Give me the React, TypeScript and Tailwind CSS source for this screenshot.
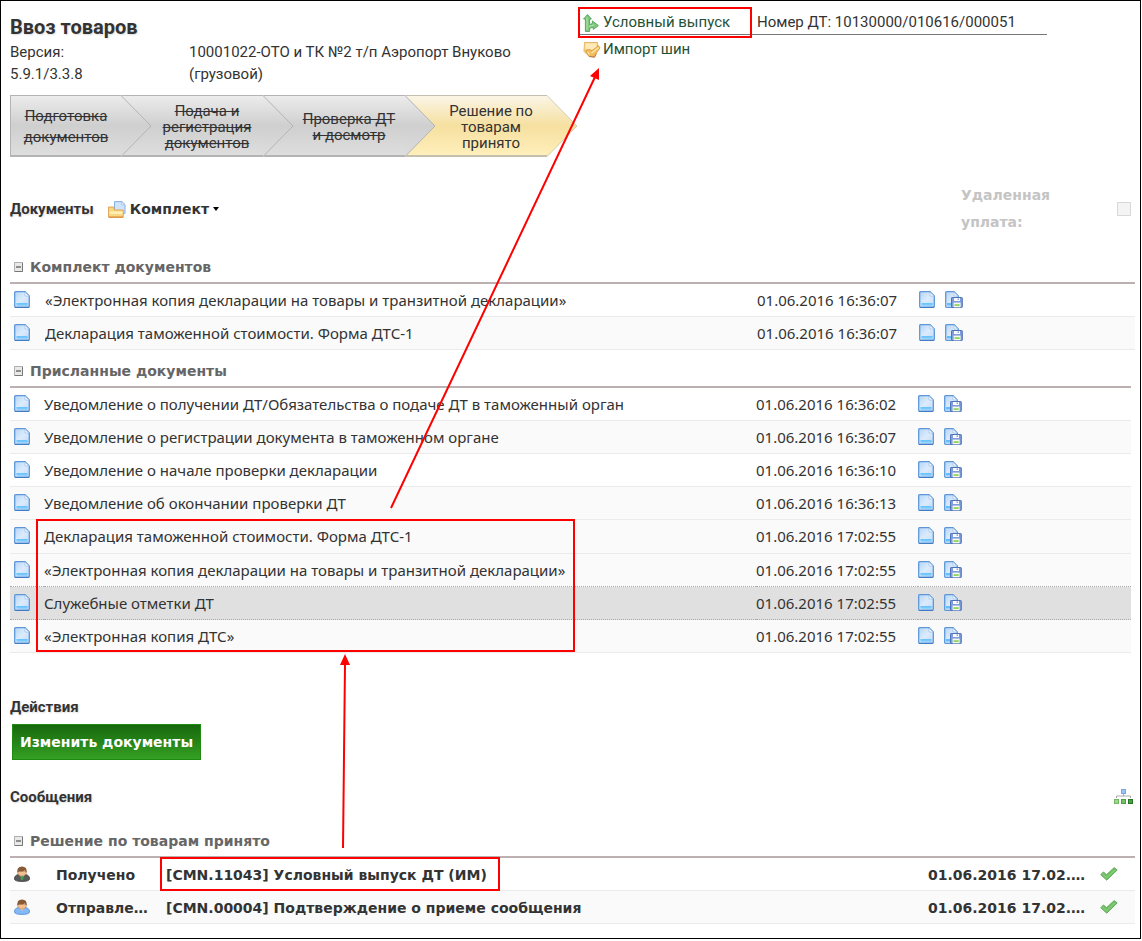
import { useState } from "react";
import clsx from "clsx";

type Doc = { title: string; date: string };

const kit: Doc[] = [
  {
    title: "«Электронная копия декларации на товары и транзитной декларации»",
    date: "01.06.2016 16:36:07",
  },
  { title: "Декларация таможенной стоимости. Форма ДТС-1", date: "01.06.2016 16:36:07" },
];

const received: Doc[] = [
  {
    title: "Уведомление о получении ДТ/Обязательства о подаче ДТ в таможенный орган",
    date: "01.06.2016 16:36:02",
  },
  { title: "Уведомление о регистрации документа в таможенном органе", date: "01.06.2016 16:36:07" },
  { title: "Уведомление о начале проверки декларации", date: "01.06.2016 16:36:10" },
  { title: "Уведомление об окончании проверки ДТ", date: "01.06.2016 16:36:13" },
  { title: "Декларация таможенной стоимости. Форма ДТС-1", date: "01.06.2016 17:02:55" },
  {
    title: "«Электронная копия декларации на товары и транзитной декларации»",
    date: "01.06.2016 17:02:55",
  },
  { title: "Служебные отметки ДТ", date: "01.06.2016 17:02:55" },
  { title: "«Электронная копия ДТС»", date: "01.06.2016 17:02:55" },
];

const messages = [
  { incoming: true, status: "Получено", text: "[CMN.11043] Условный выпуск ДТ (ИМ)" },
  { incoming: false, status: "Отправлено", text: "[CMN.00004] Подтверждение о приеме сообщения" },
];

const DocIcon = () => (
  <svg width="16" height="17" viewBox="0 0 16 17" className="block">
    <defs>
      <linearGradient id="sheet" x1="0" y1="0" x2="1" y2="1">
        <stop offset="0" stopColor="#b4d5f8" />
        <stop offset="0.5" stopColor="#dcebfc" />
        <stop offset="1" stopColor="#c0dbf8" />
      </linearGradient>
    </defs>
    <path d="M.7 1.5q0-.8.8-.8H11L15.300 5v10.500q0 .8-.8.8h-13q-.8 0-.8-.8z" fill="url(#sheet)" stroke="#5d97d8" strokeWidth="1.300" />
    <path d="M11 1.200v3.800h3.800z" fill="#fff" stroke="#9dc2ea" strokeWidth=".8" />
    <path d="M2.500 12h11v2.500h-11z" fill="#5fc0fd" />
    <path d="M2.500 13.200h11" stroke="#93d4fe" strokeWidth=".7" />
    <path d="M1 16.300h14" stroke="#3b77c2" strokeWidth="1" />
  </svg>
);

const SaveIcon = () => (
  <svg width="18" height="17" viewBox="0 0 18 17" className="block">
    <path d="M.7 1.500q0-.8.8-.8H9L13.300 5v11.300H1.500q-.8 0-.8-.8z" fill="url(#sheet)" stroke="#5d97d8" strokeWidth="1.300" />
    <path d="M9 1.200v3.800h3.800z" fill="#fff" stroke="#9dc2ea" strokeWidth=".8" />
    <path d="M2 12h5v2.500H2z" fill="#5fc0fd" />
    <rect x="6.500" y="6.500" width="10.800" height="10" rx=".6" fill="#7f9ddb" stroke="#5272b8" />
    <rect x="9" y="7" width="6" height="3" fill="#fafcff" />
    <rect x="12.600" y="7.400" width="1.400" height="1.600" fill="#8aa3d8" />
    <rect x="8.600" y="11.600" width="7" height="4.700" fill="#f7faf2" />
    <rect x="9.500" y="13.200" width="5.200" height="1.800" fill="#8fd45c" />
  </svg>
);

const CollapseIcon = () => (
  <svg width="9" height="10" viewBox="0 0 9 10" className="block">
    <rect x=".5" y=".5" width="8" height="9" fill="#e9e9e9" stroke="#b0b0b0" />
    <path d="M8.500 1v8.500H1" fill="none" stroke="#777" />
    <path d="M2 5h5" stroke="#333" />
  </svg>
);

const ReleaseIcon = () => (
  <svg width="16" height="18" viewBox="0 0 16 18" className="block">
    <path d="M4.500.6 8.400 5H6.600v5.600l2.800-1V7l6 4.600-5.200 3.800v-2.400l-3.600 1.400v3H2.400V5H.6z" fill="#82c97e" stroke="#58a565" strokeWidth="1" strokeLinejoin="round" />
    <path d="M4 3.400v12.400M6 12.500l5-1.600" stroke="#b5e2b0" strokeWidth="1" fill="none" />
  </svg>
);

const ImportIcon = () => (
  <svg width="18" height="17" viewBox="0 0 18 17" className="block">
    <path d="M1.500 1.500h13V8L10 13H3.500L1 10.500z" fill="#fbd988" stroke="#e8b665" />
    <path d="M2.500 2.500h11v4.500L7 8.500l-4.500-1z" fill="#fdeabb" />
    <path d="m2.500 9.500 3 5.500 6 1 2.500-5L17 7l-1.600-2.500L9 10 6.500 8.500z" fill="#f4bd5c" stroke="#d39a45" strokeWidth=".9" strokeLinejoin="round" />
    <path d="m8.500 12 7-5.500M4.500 11l2 2.500" stroke="#fde8b4" strokeWidth="1.200" fill="none" />
    <path d="m6 15.500 5.500.7 1.500-3" fill="none" stroke="#b9774c" />
  </svg>
);

const FolderIcon = () => (
  <svg width="18" height="17" viewBox="0 0 18 17" className="block">
    <path d="M6.500.600h7.500L17 3.500v9H6.500z" fill="#cfe3fa" stroke="#86afe4" />
    <path d="M13.600.800v3h3.200z" fill="#fff" stroke="#9dbfe8" strokeWidth=".8" />
    <path d="M.600 6h5l.8 3h8.800v7.400H.600z" fill="#f8d981" stroke="#e0a256" />
    <path d="M1.500 10.500h13v2.500h-13z" fill="#fdf0b5" />
    <path d="M1 16h14" stroke="#d98a3c" />
  </svg>
);

const PersonIcon = ({ incoming }: { incoming: boolean }) => (
  <svg width="16" height="16" viewBox="0 0 16 16" className="block">
    <path
      d="M.5 13Q.3 9.300 4.500 8.600h7q4.200.7 4 4.400-.3 2.400-7.500 2.400T.5 13z"
      fill={incoming ? "#5a5a5a" : "#84b8f6"}
      stroke={incoming ? "#444" : "#5a92dc"}
      strokeWidth=".9"
    />
    {incoming ? <path d="M6 9h4l-2 5z" fill="#ddd" /> : <path d="M5 9h6l-3 2.600z" fill="#f6d2ac" />}
    {incoming && <path d="M7.200 9.400h1.700l.5 3.400L8 14.400l-1.300-1.600z" fill="#3fa648" />}
    <path d="M3.600 5.500h8.800q0 4.500-4.400 4.500T3.600 5.500z" fill="#f0c090" stroke="#b87a48" strokeWidth=".6" />
    <path d="M3.400 6.500Q2.600.500 8 .500t4.600 6q-1-.300-1.600-2-3 1.200-5.500.8-1 .2-2.100 1.200z" fill="#8a5a34" />
  </svg>
);

const TreeIcon = () => (
  <svg width="19" height="16" viewBox="0 0 19 16" className="block">
    <path d="M2.500 9v-2h14v2M9.500 5v2" fill="none" stroke="#aaa" />
    <rect x="7.500" y=".5" width="4" height="4" fill="#9cc3f5" stroke="#78a5e4" />
    <rect x=".5" y="10.500" width="4" height="4" fill="#9bd88a" stroke="#70b862" />
    <rect x="7.500" y="10.500" width="4" height="4" fill="#74c064" stroke="#4f9e43" />
    <rect x="14.500" y="10.500" width="4" height="4" fill="#4ba042" stroke="#2b7427" />
  </svg>
);

const CheckIcon = () => (
  <svg width="18" height="14" viewBox="0 0 18 14" className="block">
    <path d="M.8 7.800 3.400 5l3.200 2.600L14.200.6 17.200 3 6.800 13.200z" fill="#74c268" stroke="#58a552" strokeWidth=".9" strokeLinejoin="round" />
    <path d="m2.500 7.200 4.100 3.600 8-7.600" stroke="#93d388" strokeWidth=".8" fill="none" />
  </svg>
);

// right edge of a step: the grey or yellow tip that runs into the next one
const StepTip = ({ active = false }: { active?: boolean }) => (
  <svg width="31" height="62" viewBox="0 0 31 62" className="block">
    <defs>
      <linearGradient id="tipGrey" x1="0" y1="0" x2="0" y2="1">
        <stop offset="0" stopColor="#ececec" />
        <stop offset="0.5" stopColor="#cfcfcf" />
        <stop offset="1" stopColor="#dedede" />
      </linearGradient>
      <linearGradient id="tipYellow" x1="0" y1="0" x2="0" y2="1">
        <stop offset="0" stopColor="#faf5e6" />
        <stop offset="0.5" stopColor="#f6e0a0" />
        <stop offset="1" stopColor="#ffefba" />
      </linearGradient>
    </defs>
    <path d="M0 0 30 31 0 62z" fill={active ? "url(#tipYellow)" : "url(#tipGrey)"} />
    <path d="M0 .5 30 31 0 61.500" fill="none" stroke={active ? "#d3cdb8" : "#b4b4b4"} />
  </svg>
);

const Step = ({
  lines,
  first,
  active,
  layer,
}: {
  lines: string[];
  first?: boolean;
  active?: boolean;
  layer: string;
}) => (
  <li
    className={clsx(
      "relative flex h-[62px] flex-col justify-center border-t border-b-2 pt-0.5 text-center",
      layer,
      first ? "w-[111px] border-l leading-[21px]" : "w-[142px] pl-[30px] leading-4",
      active
        ? "border-[#c4bfae] bg-linear-to-b from-[#faf5e6] via-[#f6e0a0] to-[#ffefba]"
        : "border-[#b4b4b4] bg-linear-to-b from-[#ececec] via-[#cfcfcf] to-[#dedede] line-through",
    )}
  >
    {lines.map((line) => (
      <span key={line} className="block whitespace-nowrap">
        {line}
      </span>
    ))}
    <div className="absolute -top-px left-full">
      <StepTip active={active} />
    </div>
  </li>
);

const GroupTitle = ({
  children,
  open,
  onToggle,
}: {
  children: string;
  open: boolean;
  onToggle: () => void;
}) => (
  <h3 className="border-b-2 border-[#bdb0b0]">
    <button
      type="button"
      aria-expanded={open}
      onClick={onToggle}
      className="flex h-[30px] items-center gap-[7px] pl-1 font-['DejaVu_Sans',sans-serif] text-sm font-bold text-[#666]"
    >
      <CollapseIcon />
      {children}
    </button>
  </h3>
);

const DocTable = ({
  title,
  docs,
  selected,
  wide = false,
}: {
  title: string;
  docs: Doc[];
  selected?: number;
  wide?: boolean;
}) => {
  const [open, setOpen] = useState(true);
  return (
    <section>
      <GroupTitle open={open} onToggle={() => setOpen((prev) => !prev)}>
        {title}
      </GroupTitle>
      {open && (
        <table className="w-full table-fixed border-separate border-spacing-0 font-['Noto_Sans',sans-serif] text-[15px]">
          <colgroup>
            <col className={wide ? "w-[35px]" : "w-[34px]"} />
            <col />
            <col className="w-[162px]" />
            <col className={wide ? "w-[216px]" : "w-[213px]"} />
          </colgroup>
          <tbody>
            {docs.map((doc, i) => (
              <tr
                key={i}
                className={clsx(
                  "*:border-b *:p-0",
                  i === 4 ? "*:h-[34px]" : "*:h-[33px]",
                  i === selected || i + 1 === selected
                    ? "*:border-dotted *:border-[#aaa]"
                    : "*:border-[#ebebeb]",
                  i === selected ? "bg-[#e0e0e0]" : (i % 2 === 1 || i === 4) && "bg-[#fafafa]",
                )}
              >
                <td className="pb-0.5! pl-1!">
                  <DocIcon />
                </td>
                <td className="truncate">{doc.title}</td>
                <td>{doc.date}</td>
                <td className="pb-0.5!">
                  <div className="flex gap-2.5">
                    <button type="button" aria-label="Открыть">
                      <DocIcon />
                    </button>
                    <button type="button" aria-label="Сохранить">
                      <SaveIcon />
                    </button>
                  </div>
                </td>
              </tr>
            ))}
          </tbody>
        </table>
      )}
    </section>
  );
};

const MessageTable = () => {
  const [open, setOpen] = useState(true);
  return (
    <section className="mt-[18px]">
      <GroupTitle open={open} onToggle={() => setOpen((prev) => !prev)}>
        Решение по товарам принято
      </GroupTitle>
      {open && (
        <table className="w-full table-fixed border-separate border-spacing-0 font-['DejaVu_Sans',sans-serif] text-sm font-bold">
          <colgroup>
            <col className="w-[46px]" />
            <col className="w-[110px]" />
            <col />
            <col className="w-[172px]" />
            <col className="w-[35px]" />
          </colgroup>
          <tbody>
            {messages.map((m) => (
              <tr key={m.text} className="*:h-[33px] *:border-b *:border-[#ebebeb] *:p-0 even:bg-[#fafafa]">
                <td className="pl-1!">
                  <PersonIcon incoming={m.incoming} />
                </td>
                <td className="truncate pt-0.5! pr-4!">{m.status}</td>
                <td className="truncate pt-0.5!">{m.text}</td>
                <td className="truncate pt-0.5! pr-2.5!">01.06.2016 17.02.55</td>
                <td>
                  <CheckIcon />
                </td>
              </tr>
            ))}
          </tbody>
        </table>
      )}
    </section>
  );
};

// red frames and arrows drawn over the page
const Callouts = () => (
  <svg width="760" height="900" className="pointer-events-none absolute -top-px -left-px z-50">
    <g fill="none" stroke="#ff0000" strokeWidth="2">
      <rect x="579" y="8" width="172" height="29" />
      <rect x="37" y="520" width="537" height="131" />
      <rect x="161" y="858" width="338" height="32" />
      <path d="M391 508 595 77M343 848l2-184" />
    </g>
    <path d="m599 68-9 8 9 4zM345 654l-5 11h10z" fill="#ff0000" />
  </svg>
);

const heading = "text-[15px] leading-[22px] font-bold [text-shadow:1px_1px_2px_#ddd]";

export default function App() {
  return (
    <main className="relative mr-px border border-black bg-white pb-3.5 pl-[9px] font-[Roboto,sans-serif] text-[15px] text-[#333]">
      <header className="flex pt-3">
        <div className="w-[570px] shrink-0">
          <h1 className="text-xl leading-7 font-bold [text-shadow:1px_1px_2px_#ddd]">Ввоз товаров</h1>
          <div className="flex leading-[22px]">
            <p className="w-[179px]">
              Версия:
              <br />
              5.9.1/3.3.8
            </p>
            <p>
              10001022-ОТО и ТК №2 т/п Аэропорт Внуково
              <br />
              (грузовой)
            </p>
          </div>
        </div>
        <div className="-mt-0.5 w-[467px]">
          <div className="flex h-6 items-center border-b border-[#777]">
            <a href="#release" className="flex w-[177px] items-center gap-1 pl-[3px] text-[#1f5135]">
              <ReleaseIcon />
              Условный выпуск
            </a>
            <span>Номер ДТ: 10130000/010616/000051</span>
          </div>
          <a href="#tyres" className="flex h-7 items-center gap-0.5 pl-[3px] text-[#1f5135]">
            <ImportIcon />
            Импорт шин
          </a>
        </div>
      </header>

      <ol className="mt-2.5 flex">
        <Step first layer="z-40" lines={["Подготовка", "документов"]} />
        <Step layer="z-30" lines={["Подача и", "регистрация", "документов"]} />
        <Step layer="z-20" lines={["Проверка ДТ", "и досмотр"]} />
        <Step active layer="z-10" lines={["Решение по", "товарам", "принято"]} />
      </ol>

      <div className="mt-[25px] flex h-[54px] items-center pr-[9px]">
        <h2 className={heading}>Документы</h2>
        <button type="button" className="ml-3.5 flex items-center gap-1 font-['DejaVu_Sans',sans-serif] text-sm font-bold">
          <FolderIcon />
          Комплект
          <span className="border-x-3 border-t-4 border-x-transparent border-t-black" />
        </button>
        <label
          htmlFor="remote"
          className="ml-auto w-[156px] font-['DejaVu_Sans',sans-serif] text-sm leading-[27px] font-bold text-[#c4c4c4]"
        >
          Удаленная
          <br />
          уплата:
        </label>
        <input
          id="remote"
          type="checkbox"
          disabled
          className="size-3.5 appearance-none border border-[#d8d8d8] bg-[#f4f4f4]"
        />
      </div>

      <div className="mt-4 pr-[5px]">
        <DocTable wide title="Комплект документов" docs={kit} />
      </div>
      <div className="mt-1.5 pr-[9px]">
        <DocTable title="Присланные документы" docs={received} selected={6} />
      </div>

      <h2 className={clsx(heading, "mt-[43px]")}>Действия</h2>
      <button
        type="button"
        className="mt-1.5 ml-0.5 block h-9 border border-[#1f8a12] bg-linear-to-b from-[#17680d] to-[#35a023] px-[7px] font-['DejaVu_Sans',sans-serif] text-sm font-bold text-white"
      >
        Изменить документы
      </button>

      <div className="pr-[5px]">
        <div className="mt-[26px] flex items-center justify-between pr-0.5">
          <h2 className={heading}>Сообщения</h2>
          <button type="button" aria-label="Схема сообщений">
            <TreeIcon />
          </button>
        </div>
        <MessageTable />
      </div>

      <Callouts />
    </main>
  );
}
